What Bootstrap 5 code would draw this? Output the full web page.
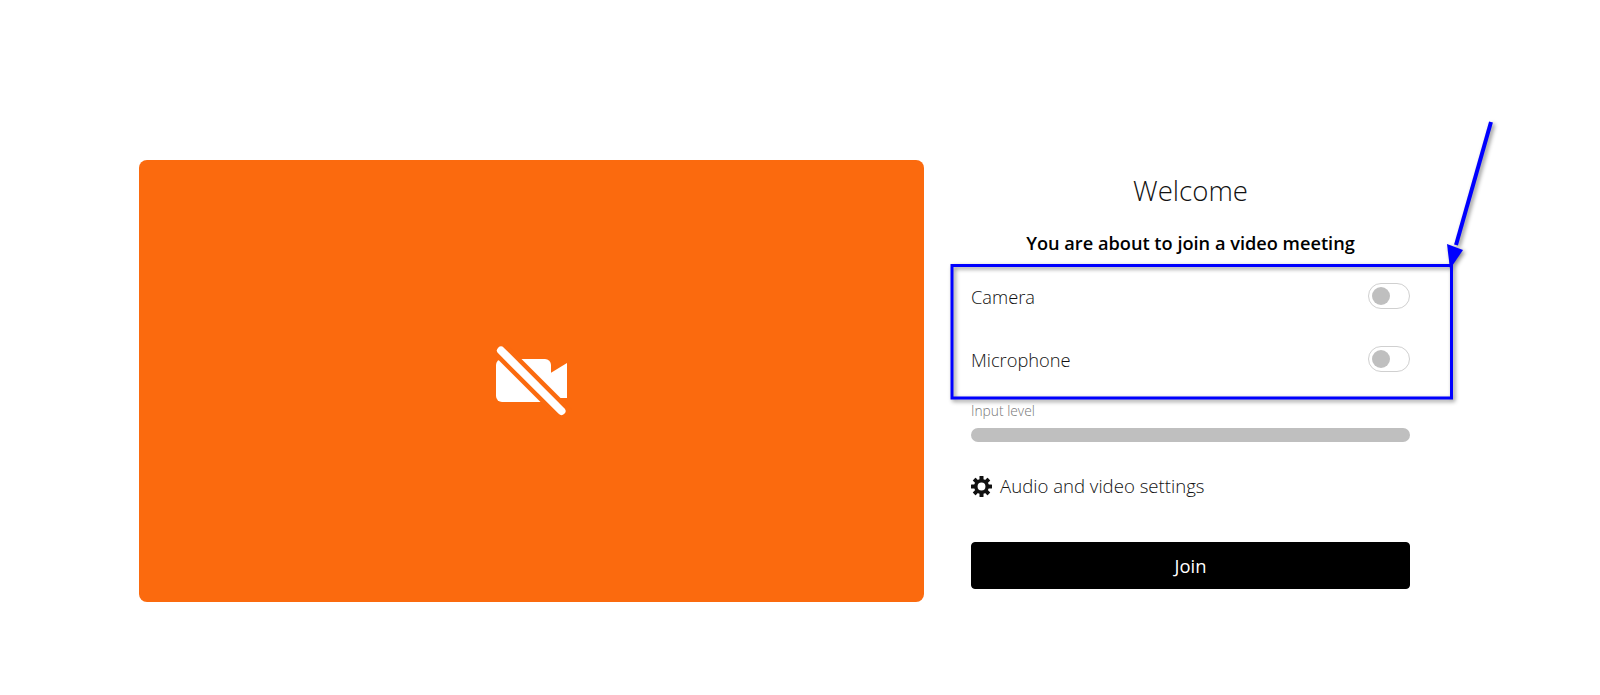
<!DOCTYPE html>
<html lang="en">
<head>
<meta charset="utf-8">
<title>Welcome</title>
<link href="https://cdn.jsdelivr.net/npm/bootstrap@5.3.0/dist/css/bootstrap.min.css" rel="stylesheet">
<style>
html, body { height: 100%; }
body { font-family: "Open Sans", "Noto Sans", "Liberation Sans", sans-serif; background: #fff; color: #222; overflow: hidden; }
.stage { position: relative; height: 695px; padding: 160px 0 0 139px; }
.video-pane { width: 785px; height: 442px; background: #fb6a0e; border-radius: 8px; }
.side-pane { width: 439px; margin-left: 47px; }
.welcome-title { font-size: 27.6px; font-weight: 300; line-height: 36px; margin: 12px 0 23px; color: #111; }
.join-lead { font-size: 18.2px; font-weight: 600; line-height: 24px; margin: 0 0 9px; color: #000; }
.toggle-row { height: 63.5px; font-size: 18.3px; font-weight: 300; color: #111; }
.toggle-row label { padding-top: 1px; }
.toggle-row .form-check-input { width: 42px; height: 26px; margin: 0; float: none; border-color: #d0d0d0; box-shadow: none; }
.level-label { font-size: 13.8px; font-weight: 300; color: #777; line-height: 16px; margin: 12px 0 9px; }
.level-track { height: 14px; background: #bfbfbf; border-radius: 7px; }
.settings-link { font-size: 18.6px; font-weight: 300; color: #111; margin: 32px 0 44px; line-height: 24px; text-decoration: none; }
.join-btn { --bs-btn-bg: #000; --bs-btn-border-color: #000; --bs-btn-color: #fff; --bs-btn-hover-bg: #000; --bs-btn-hover-color: #fff; height: 47px; font-size: 18.4px; font-weight: 400; border-radius: 4px; padding-top: 6px; }
.annotation { position: absolute; left: 0; top: 0; pointer-events: none; filter: drop-shadow(2px 2px 2px rgba(0,0,0,.45)); }
</style>
</head>
<body>
<div class="stage d-flex align-items-start">
  <div class="video-pane d-flex align-items-center justify-content-center flex-shrink-0">
    <svg width="80" height="72" viewBox="492 345 80 72" aria-label="Camera off">
      <rect x="496" y="359" width="55" height="43" rx="6" fill="#fff"/>
      <path d="M549 374 567 363V398H549Z" fill="#fff"/>
      <path d="M490 339.500 572 421.500" stroke="#fb6a0e" stroke-width="17"/>
      <path d="M501 350.500 561.500 411" stroke="#fff" stroke-width="8" stroke-linecap="round"/>
    </svg>
  </div>
  <div class="side-pane flex-shrink-0">
    <h1 class="welcome-title text-center">Welcome</h1>
    <p class="join-lead text-center">You are about to join a video meeting</p>
    <div class="toggle-row d-flex align-items-center justify-content-between form-switch p-0">
      <label for="cam">Camera</label>
      <input id="cam" class="form-check-input" type="checkbox" role="switch">
    </div>
    <div class="toggle-row d-flex align-items-center justify-content-between form-switch p-0">
      <label for="mic">Microphone</label>
      <input id="mic" class="form-check-input" type="checkbox" role="switch">
    </div>
    <p class="level-label">Input level</p>
    <div class="level-track"></div>
    <a class="settings-link d-flex align-items-center gap-2" href="#">
      <svg width="21" height="21" viewBox="-12 -12 24 24" aria-hidden="true">
        <g fill="#111">
          <rect x="-2.3" y="-12" width="4.6" height="6" rx=".6"/>
          <rect x="-2.3" y="-12" width="4.6" height="6" rx=".6" transform="rotate(45)"/>
          <rect x="-2.3" y="-12" width="4.6" height="6" rx=".6" transform="rotate(90)"/>
          <rect x="-2.3" y="-12" width="4.6" height="6" rx=".6" transform="rotate(135)"/>
          <rect x="-2.3" y="-12" width="4.6" height="6" rx=".6" transform="rotate(180)"/>
          <rect x="-2.3" y="-12" width="4.6" height="6" rx=".6" transform="rotate(225)"/>
          <rect x="-2.3" y="-12" width="4.6" height="6" rx=".6" transform="rotate(270)"/>
          <rect x="-2.3" y="-12" width="4.6" height="6" rx=".6" transform="rotate(315)"/>
        </g>
        <circle r="6.5" fill="none" stroke="#111" stroke-width="4"/>
      </svg>
      <span>Audio and video settings</span>
    </a>
    <button type="button" class="btn join-btn w-100">Join</button>
  </div>
  <svg class="annotation" width="1600" height="695" viewBox="0 0 1600 695" aria-hidden="true">
    <rect x="952" y="265.500" width="499.500" height="132.500" fill="none" stroke="#0000ff" stroke-width="3"/>
    <path d="M1491 122 1456 245" stroke="#0000ff" stroke-width="4" fill="none"/>
    <path d="M1447 244 1463 250 1450 269Z" fill="#0000ff"/>
  </svg>
</div>
<script src="https://cdn.jsdelivr.net/npm/bootstrap@5.3.0/dist/js/bootstrap.bundle.min.js"></script>
</body>
</html>
